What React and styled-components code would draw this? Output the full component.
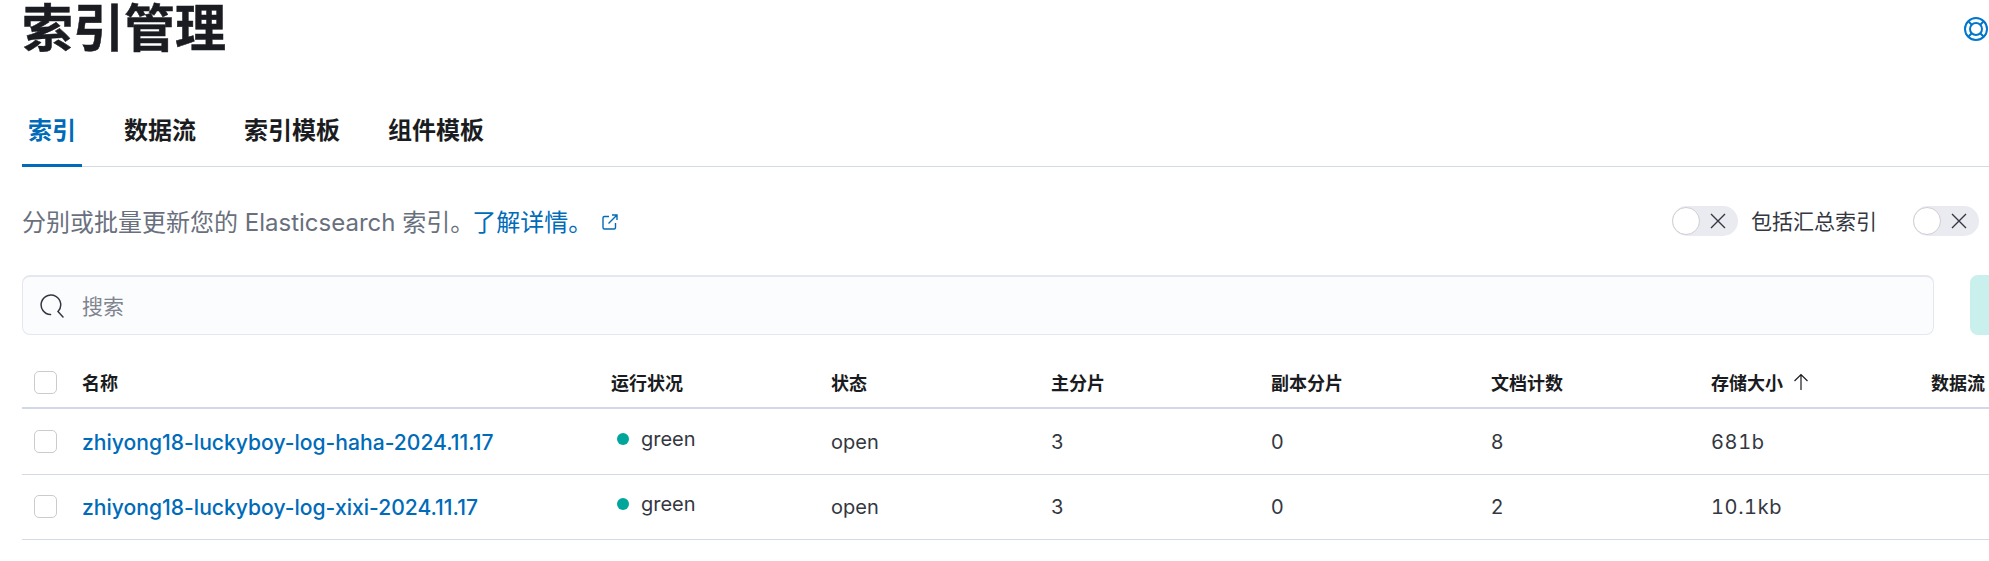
import React from 'react';
import styled, { createGlobalStyle } from 'styled-components';

const GlobalStyle = createGlobalStyle`
  html, body {
    margin: 0;
    padding: 0;
    background: #ffffff;
    overflow: hidden;
  }
  body {
    font-family: Inter, "Noto Sans CJK SC", sans-serif;
    color: #343741;
  }
`;

const Page = styled.div`
  width: 1989px;
  height: 561px;
  box-sizing: border-box;
  padding-left: 22px;
  overflow: hidden;
`;

const TitleRow = styled.div`
  display: flex;
  align-items: center;
  justify-content: space-between;
  height: 58px;
  padding-right: 1px;
`;

const Title = styled.h1`
  margin: 0;
  font-size: 51px;
  line-height: 58px;
  font-weight: 700;
  color: #1a1c21;
  -webkit-text-stroke: 0.5px #1a1c21;
`;

const Tabs = styled.div`
  display: flex;
  gap: 36px;
  height: 69px;
  margin-top: 39px;
  box-sizing: content-box;
  border-bottom: 1px solid #d3dae6;
`;

const Tab = styled.div`
  padding: 0 6px;
  height: 70px;
  line-height: 68px;
  font-size: 24px;
  font-weight: 700;
  color: ${p => (p.$active ? '#006bb8' : '#1a1c21')};
  border-bottom: ${p => (p.$active ? '3px solid #006bb8' : '0')};
  box-sizing: border-box;
`;

const DescRow = styled.div`
  display: flex;
  align-items: center;
  justify-content: space-between;
  height: 30px;
  margin-top: 39px;
  padding-right: 10px;
`;

const Desc = styled.div`
  display: flex;
  align-items: center;
  padding-bottom: 2px;
  font-size: 24px;
  color: #69707d;
`;

const DescLink = styled.span`
  color: #006bb8;
  margin-left: -2px;
`;

const External = styled.svg`
  width: 16px;
  height: 16px;
  margin: 4px 0 0 10px;
  color: #006bb8;
`;

const Toggles = styled.div`
  display: flex;
  align-items: center;
`;

const SwitchTrack = styled.div`
  width: 66px;
  height: 30px;
  border-radius: 15px;
  background: #e9ebf0;
  display: flex;
  align-items: center;
  justify-content: space-between;
  padding-right: 12px;
  box-sizing: border-box;
`;

const SwitchThumb = styled.div`
  width: 28px;
  height: 28px;
  box-sizing: border-box;
  border-radius: 50%;
  background: #ffffff;
  border: 1px solid #cdcfd4;
`;

const ToggleLabel = styled.span`
  font-size: 21px;
  color: #343741;
  margin: 0 36px 2px 13px;
`;

const SearchRow = styled.div`
  display: flex;
  gap: 36px;
  margin-top: 39px;
`;

const SearchBox = styled.div`
  flex: 0 0 1912px;
  height: 60px;
  box-sizing: border-box;
  display: flex;
  align-items: center;
  gap: 18px;
  padding-left: 17px;
  background: #fbfcfd;
  border: 1px solid #e4e7f0;
  border-top-width: 2px;
  border-radius: 8px;
`;

const SearchHint = styled.span`
  margin-bottom: 2px;
  font-size: 21px;
  color: #7f848e;
`;

const CreateButton = styled.div`
  flex: 0 0 200px;
  height: 60px;
  background: #c9f0ec;
  border-radius: 8px;
`;

const Table = styled.div`
  width: 2200px;
  margin-top: 24px;
`;

const Row = styled.div`
  display: grid;
  grid-template-columns: 60px 529px repeat(7, 220px);
  align-items: center;
  box-sizing: border-box;
  height: ${p => (p.$head ? '50px' : '65px')};
  margin-bottom: ${p => (p.$head ? '1px' : '0')};
  border-bottom: ${p => (p.$head ? '2px solid #d3d8e6' : '1px solid #d3dae6')};
`;

const CheckCell = styled.div`
  display: flex;
  padding-left: 12px;
  margin-top: -2px;
`;

const Checkbox = styled.div`
  width: 23px;
  height: 23px;
  box-sizing: border-box;
  background: #ffffff;
  border: 1px solid #c9cbcf;
  border-radius: 5px;
`;

const HeadCell = styled.div`
  display: flex;
  align-items: center;
  gap: 9px;
  margin-top: -2px;
  font-size: 18px;
  font-weight: 700;
  color: #1a1c21;
`;

const Cell = styled.div`
  font-size: 20px;
  color: #343741;
`;

const SizeCell = styled(Cell)`
  font-variant-numeric: tabular-nums;
  letter-spacing: 0.6px;
`;

const NameLink = styled.span`
  font-size: 21.1px;
  font-weight: 500;
  color: #006bb8;
  white-space: nowrap;
`;

const Health = styled.div`
  display: flex;
  align-items: center;
  gap: 12px;
  padding-left: 6px;
  margin-top: -7px;
  font-size: 20px;
  color: #343741;
`;

const Dot = styled.span`
  width: 12px;
  height: 12px;
  border-radius: 50%;
  background: #00a69b;
`;

const LifeBuoy = () => (
  <svg width="24" height="24" viewBox="0 0 24 24" fill="none" stroke="#0077cc" strokeWidth="2">
    <circle cx="12" cy="12" r="11" />
    <circle cx="12" cy="12" r="6" />
    <path d="M4.500 4.500 7.800 7.800M19.500 4.500 16.200 7.800M4.500 19.500 7.800 16.200M19.500 19.500 16.200 16.200" />
  </svg>
);

const XIcon = () => (
  <svg width="16" height="16" viewBox="0 0 16 16" fill="none" stroke="#343741" strokeWidth="1.4">
    <path d="M1 1 15 15M15 1 1 15" />
  </svg>
);

const SearchIcon = () => (
  <svg width="24" height="24" viewBox="0 0 24 24" fill="none" stroke="#343741" strokeWidth="1.5" strokeLinecap="round">
    <path d="M10.500 20.600A9.800 9.800 0 1 1 18 17.600L23 23" />
  </svg>
);

const ArrowUp = () => (
  <svg width="18" height="18" viewBox="0 0 18 18" fill="none" stroke="#1a1c21" strokeWidth="1.2">
    <path d="M9 1.500V17M2.500 8 9 1.500 15.500 8" />
  </svg>
);

const rows = [
  { name: 'zhiyong18-luckyboy-log-haha-2024.11.17', docs: '8', size: '681b' },
  { name: 'zhiyong18-luckyboy-log-xixi-2024.11.17', docs: '2', size: '10.1kb' },
];

export default function App() {
  return (
    <Page>
      <GlobalStyle />
      <TitleRow>
        <Title>索引管理</Title>
        <LifeBuoy />
      </TitleRow>
      <Tabs>
        <Tab $active>索引</Tab>
        <Tab>数据流</Tab>
        <Tab>索引模板</Tab>
        <Tab>组件模板</Tab>
      </Tabs>
      <DescRow>
        <Desc>
          分别或批量更新您的 Elasticsearch 索引。
          <DescLink>了解详情。</DescLink>
          <External viewBox="0 0 16 16" fill="none" stroke="currentColor" strokeWidth="1.4">
            <path d="M7 2.500H2.500a1.500 1.500 0 0 0-1.500 1.500V13.500a1.500 1.500 0 0 0 1.500 1.500H12a1.500 1.500 0 0 0 1.500-1.500V9M6.500 9.500 15 1M10 1h5v5" />
          </External>
        </Desc>
        <Toggles>
          <SwitchTrack><SwitchThumb /><XIcon /></SwitchTrack>
          <ToggleLabel>包括汇总索引</ToggleLabel>
          <SwitchTrack><SwitchThumb /><XIcon /></SwitchTrack>
        </Toggles>
      </DescRow>
      <SearchRow>
        <SearchBox>
          <SearchIcon />
          <SearchHint>搜索</SearchHint>
        </SearchBox>
        <CreateButton />
      </SearchRow>
      <Table>
        <Row $head>
          <CheckCell><Checkbox /></CheckCell>
          <HeadCell>名称</HeadCell>
          <HeadCell>运行状况</HeadCell>
          <HeadCell>状态</HeadCell>
          <HeadCell>主分片</HeadCell>
          <HeadCell>副本分片</HeadCell>
          <HeadCell>文档计数</HeadCell>
          <HeadCell>存储大小 <ArrowUp /></HeadCell>
          <HeadCell>数据流</HeadCell>
        </Row>
        {rows.map(row => (
          <Row key={row.name}>
            <CheckCell><Checkbox /></CheckCell>
            <NameLink>{row.name}</NameLink>
            <Health><Dot />green</Health>
            <Cell>open</Cell>
            <Cell>3</Cell>
            <Cell>0</Cell>
            <Cell>{row.docs}</Cell>
            <SizeCell>{row.size}</SizeCell>
          </Row>
        ))}
      </Table>
    </Page>
  );
}
